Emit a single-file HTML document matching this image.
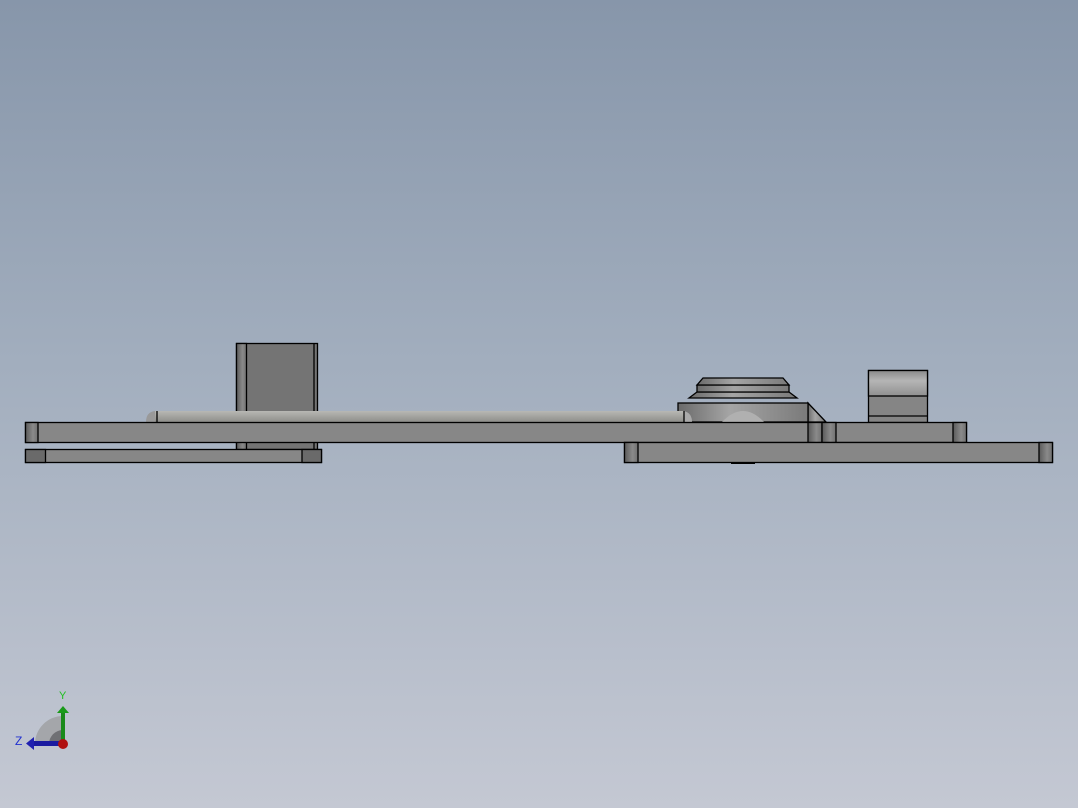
<!DOCTYPE html>
<html><head><style>
html,body{margin:0;padding:0}
body{width:1078px;height:808px;background:linear-gradient(#8796aa 0%,#a2aebe 45%,#c4c8d3 100%);overflow:hidden}
svg{position:absolute;left:0;top:0}
</style></head><body>
<svg width="1078" height="808" viewBox="0 0 1078 808" font-family="Liberation Sans, sans-serif">
<defs>
<linearGradient id="edge" x1="0" x2="1"><stop offset="0" stop-color="#5a5a5a"/><stop offset="0.6" stop-color="#8a8a8a"/><stop offset="1" stop-color="#707070"/></linearGradient>
<linearGradient id="rod" x1="0" y1="0" x2="0" y2="1"><stop offset="0" stop-color="#b8b8b4"/><stop offset="1" stop-color="#8e8e8a"/></linearGradient>
<linearGradient id="knob" x1="0" x2="1"><stop offset="0" stop-color="#6a6a6a"/><stop offset="0.4" stop-color="#a5a5a5"/><stop offset="1" stop-color="#7a7a7a"/></linearGradient>
<linearGradient id="blk" x1="0" y1="0" x2="0" y2="1"><stop offset="0" stop-color="#8a8a8a"/><stop offset="0.4" stop-color="#b5b5b5"/><stop offset="1" stop-color="#909090"/></linearGradient>
</defs>
<g stroke="#000" stroke-width="1.3">
<rect x="236.5" y="343.5" width="81" height="106" fill="#747474"/>
<rect x="236.5" y="343.5" width="10" height="106" fill="url(#edge)"/>
<line x1="314" y1="344" x2="314" y2="449"/>
<!-- knob -->
<path d="M670 422 L678 412 L678 422 Z" fill="#888"/>
<path d="M808 403 L826 422 L808 422 Z" fill="url(#knob)"/>
<rect x="678" y="403" width="130" height="19" fill="url(#knob)"/>
<path d="M722 422 Q743 400 764 422 Z" fill="#b0b0b0" stroke="none"/>
<path d="M689 398 L697 392 L789 392 L797 398 Z" fill="url(#knob)"/>
<path d="M697 392 L697 385 L789 385 L789 392 Z" fill="url(#knob)"/>
<path d="M697 385 L703 378 L783 378 L789 385 Z" fill="url(#knob)"/>
<!-- rod -->
<rect x="155" y="411" width="529" height="11" fill="url(#rod)" stroke="none"/>
<path d="M155 411 Q146 412 146 422 L155 422 Z" fill="#999" stroke="none"/>
<path d="M684 411 Q692 413 692 422 L684 422 Z" fill="#aaa" stroke="none"/>
<line x1="157" y1="411" x2="157" y2="422"/>
<line x1="684" y1="411" x2="684" y2="422"/>
<rect x="868.5" y="370.5" width="59" height="52" fill="#858585"/>
<rect x="868.5" y="370.5" width="59" height="25.5" fill="url(#blk)"/>
<line x1="868" y1="416" x2="928" y2="416"/>
<rect x="25.5" y="422.5" width="941" height="20" fill="#878787"/>
<rect x="25.5" y="422.5" width="12.5" height="20" fill="url(#edge)"/>
<rect x="808" y="422.5" width="14" height="20" fill="url(#edge)"/>
<rect x="822" y="422.5" width="14" height="20" fill="url(#edge)"/>
<rect x="953" y="422.5" width="13.5" height="20" fill="url(#edge)"/>
<rect x="25.5" y="449.5" width="296" height="13" fill="#878787"/>
<rect x="25.5" y="449.5" width="20" height="13" fill="#6a6a6a"/>
<rect x="302" y="449.5" width="19.5" height="13" fill="#6a6a6a"/>
<rect x="624.5" y="442.5" width="428" height="20" fill="#878787"/>
<rect x="624.5" y="442.5" width="13.5" height="20" fill="url(#edge)"/>
<rect x="1039" y="442.5" width="13.5" height="20" fill="url(#edge)"/>
<line x1="731" y1="463" x2="755" y2="463" stroke-width="2"/>
</g>
<path d="M35 744 A28 28 0 0 1 63 716 L63 744 Z" fill="#a4a6aa"/>
<path d="M49 744 A14 14 0 0 1 63 730 L63 744 Z" fill="#6f7074"/>
<rect x="61" y="712" width="4" height="30" fill="#1a8a1a"/>
<path d="M57 713 L63 706 L69 713 Z" fill="#1a9a1a"/>
<rect x="33" y="741" width="28" height="5" fill="#1a1aa0"/>
<path d="M34 737 L26 743.5 L34 750 Z" fill="#2020b0"/>
<circle cx="63" cy="744" r="5" fill="#b01010"/>
<text x="59" y="699" font-size="11" fill="#20c020">Y</text>
<text x="15" y="745" font-size="12" fill="#2030d0">Z</text>
</svg>
</body></html>
